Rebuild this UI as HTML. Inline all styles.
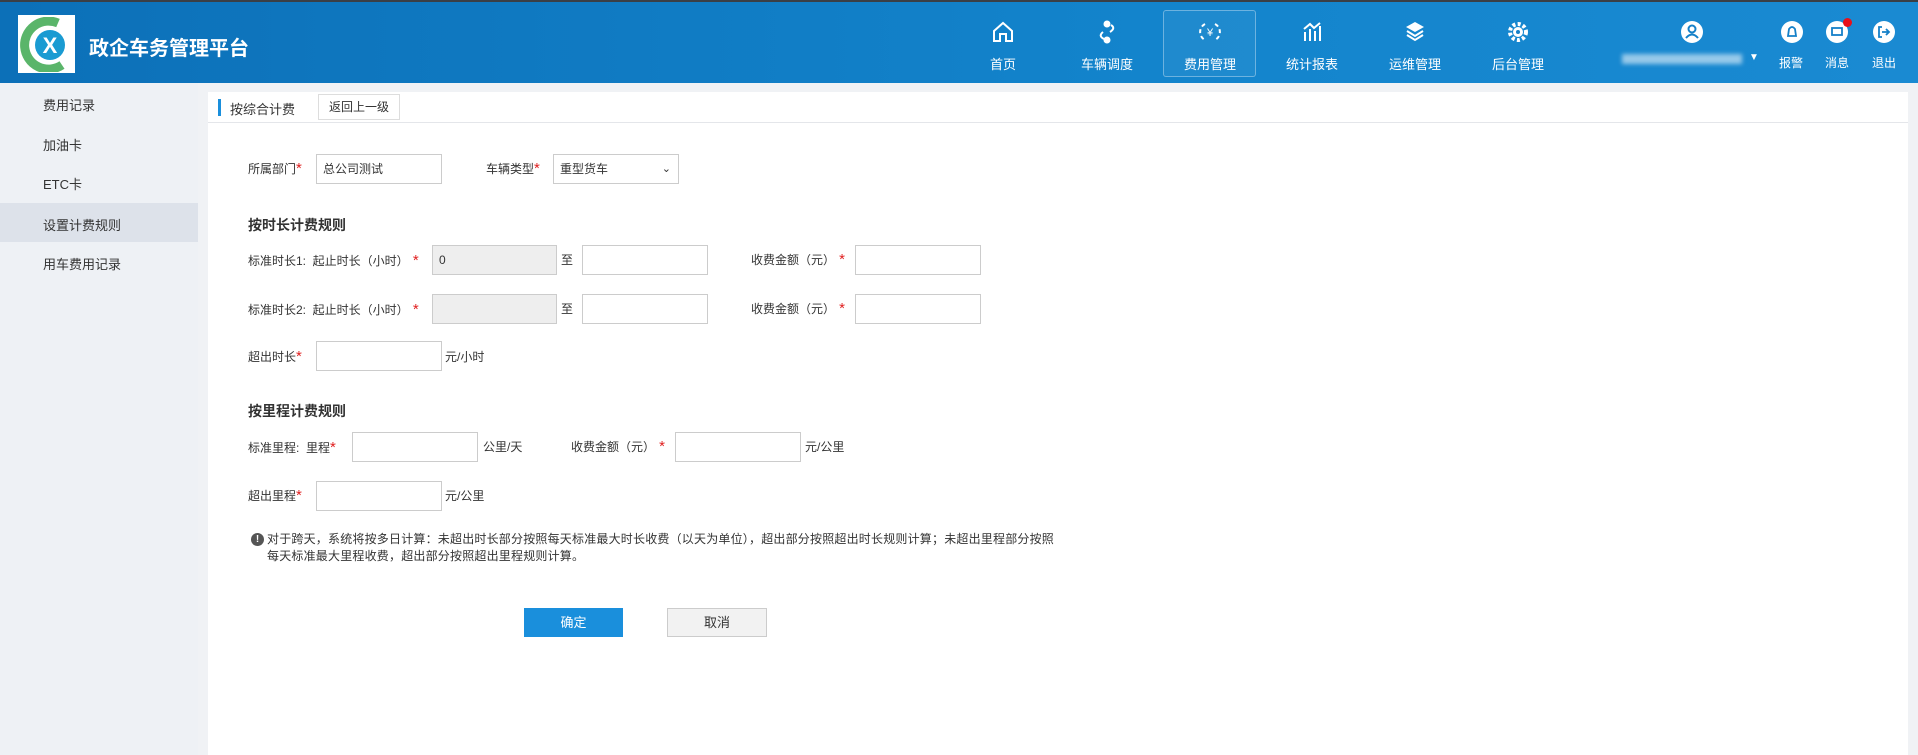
<!DOCTYPE html>
<html><head><meta charset="utf-8"><style>
*{margin:0;padding:0;box-sizing:border-box}
body{width:1918px;height:755px;overflow:hidden;background:#f0f2f5;font-family:"Liberation Sans","Noto Sans CJK SC",sans-serif;font-size:12px;color:#333;position:relative}
.a{position:absolute;white-space:nowrap}
#hd{position:absolute;left:0;top:0;width:1918px;height:83px;background:linear-gradient(90deg,#0c70b8,#1384cc 60%,#1a8ad2);border-top:2px solid #3a3f46}
.nav{position:absolute;top:0;width:100px;height:81px;color:#fff;text-align:center;font-size:13px}
.nav svg{position:absolute;left:38px;top:18px}
.nav span{position:absolute;left:0;right:0;top:52px}
.inp{position:absolute;height:30px;border:1px solid #ccc;background:#fff;font-size:12px;padding-left:6px;line-height:28px}
.r{color:#e02020;font-size:15px;line-height:12px}
.sb{position:absolute;left:43px;font-size:13px;color:#333}
</style></head><body>
<div id="hd">
 <div class="a" style="left:18px;top:13px;width:57px;height:58px;background:#fff"></div>
 <svg class="a" style="left:20px;top:15px" width="54" height="55" viewBox="0 0 54 55"><path d="M38 6 A24 24 0 1 0 42 48" fill="none" stroke="#5ab56a" stroke-width="9"/><circle cx="30" cy="28" r="15" fill="#1a9bd2"/><text x="30" y="36" font-size="22" font-weight="bold" fill="#fff" text-anchor="middle" font-family="Liberation Sans">X</text></svg>
 <div class="a" style="left:89px;top:30px;color:#fff;font-size:20px;font-weight:bold">政企车务管理平台</div>
 <div class="nav" style="left:953px"><svg width="24" height="24" viewBox="0 0 24 24" fill="none" stroke="#fff" stroke-width="2"><path d="M3 11 L12 3 L21 11 V21 H15 V14 H9 V21 H3Z"/></svg><span>首页</span></div>
 <div class="nav" style="left:1057px"><svg width="24" height="24" viewBox="0 0 24 24" fill="none" stroke="#fff" stroke-width="2"><circle cx="12" cy="4" r="2.5" fill="#fff"/><circle cx="12" cy="20" r="2.5" fill="#fff"/><path d="M16 5 Q21 8 15 12 M8 12 Q3 16 9 19"/></svg><span>车辆调度</span></div>
 <div class="a" style="left:1163px;top:8px;width:93px;height:67px;border:1px solid rgba(255,255,255,.35);border-radius:3px;background:rgba(255,255,255,.05)"></div>
 <div class="nav" style="left:1160px"><svg width="24" height="24" viewBox="0 0 24 24" fill="none" stroke="#fff" stroke-width="2"><path d="M7 4 A9 9 0 0 0 7 20 M17 4 A9 9 0 0 1 17 20" stroke-dasharray="4 3"/><text x="12" y="16" font-size="11" fill="#fff" stroke="none" text-anchor="middle">¥</text></svg><span>费用管理</span></div>
 <div class="nav" style="left:1262px"><svg width="24" height="24" viewBox="0 0 24 24" fill="none" stroke="#fff" stroke-width="2"><path d="M5 21V12 M10 21V9 M15 21V11 M20 21V6 M4 9 L10 4 L14 8 L20 3"/></svg><span>统计报表</span></div>
 <div class="nav" style="left:1365px"><svg width="24" height="24" viewBox="0 0 24 24" fill="#fff"><path d="M12 2 L21 7 L12 12 L3 7Z"/><path d="M4 11 L12 16 L20 11 M4 15 L12 20 L20 15" fill="none" stroke="#fff" stroke-width="2"/></svg><span>运维管理</span></div>
 <div class="nav" style="left:1468px"><svg width="24" height="24" viewBox="0 0 24 24"><circle cx="12" cy="12" r="8" fill="none" stroke="#fff" stroke-width="4" stroke-dasharray="3 2.3"/><circle cx="12" cy="12" r="5" fill="#fff"/><circle cx="12" cy="12" r="2" fill="#1480c8"/></svg><span>后台管理</span></div>
 <svg class="a" style="left:1681px;top:19px" width="22" height="22"><circle cx="11" cy="11" r="11" fill="#fff"/><circle cx="11" cy="8" r="3.5" fill="none" stroke="#1480c8" stroke-width="2"/><path d="M5 17 Q11 10 17 17" fill="none" stroke="#1480c8" stroke-width="2"/></svg>
 <div class="a" style="left:1622px;top:52px;width:120px;height:10px;background:rgba(255,255,255,.55);filter:blur(2px)"></div>
 <div class="a" style="left:1749px;top:50px;color:#fff;font-size:10px">▼</div>
 <svg class="a" style="left:1781px;top:19px" width="22" height="22"><circle cx="11" cy="11" r="11" fill="#fff"/><path d="M7 15 L8 8 Q11 4 14 8 L15 15Z" fill="none" stroke="#1480c8" stroke-width="1.8"/></svg>
 <div class="a" style="left:1779px;top:52px;color:#fff;font-size:12px">报警</div>
 <svg class="a" style="left:1826px;top:19px" width="22" height="22"><circle cx="11" cy="11" r="11" fill="#fff"/><rect x="6" y="7" width="10" height="7" fill="none" stroke="#1480c8" stroke-width="1.8"/></svg>
 <div class="a" style="left:1843px;top:16px;width:9px;height:9px;border-radius:50%;background:#e8101a"></div>
 <div class="a" style="left:1825px;top:52px;color:#fff;font-size:12px">消息</div>
 <svg class="a" style="left:1873px;top:19px" width="22" height="22"><circle cx="11" cy="11" r="11" fill="#fff"/><path d="M9 6 H6 V16 H9 M9 11 H16 M13 8 L16 11 L13 14" fill="none" stroke="#1480c8" stroke-width="1.8"/></svg>
 <div class="a" style="left:1872px;top:52px;color:#fff;font-size:12px">退出</div>
</div>
<div class="a" style="left:0;top:83px;width:198px;height:672px;background:#eef1f5"></div>
<div class="a" style="left:0;top:203px;width:198px;height:39px;background:#dde2ea"></div>
<div class="sb" style="top:95px">费用记录</div>
<div class="sb" style="top:135px">加油卡</div>
<div class="sb" style="top:174px">ETC卡</div>
<div class="sb" style="top:215px">设置计费规则</div>
<div class="sb" style="top:254px">用车费用记录</div>
<div class="a" style="left:208px;top:92px;width:1700px;height:663px;background:#fff"></div>
<div class="a" style="left:208px;top:122px;width:1700px;height:1px;background:#e4e6ea"></div>
<div class="a" style="left:218px;top:99px;width:3px;height:17px;background:#1a8fdc"></div>
<div class="a" style="left:230px;top:99px;font-size:13px">按综合计费</div>
<div class="a" style="left:318px;top:94px;width:82px;height:26px;border:1px solid #ddd;font-size:12px;line-height:24px;text-align:center">返回上一级</div>

<div class="a" style="left:248px;top:160px">所属部门<span class="r">*</span></div>
<div class="inp" style="left:316px;top:154px;width:126px">总公司测试</div>
<div class="a" style="left:486px;top:160px">车辆类型<span class="r">*</span></div>
<div class="inp" style="left:553px;top:154px;width:126px">重型货车<span style="position:absolute;right:7px;top:0;font-size:11px">⌄</span></div>

<div class="a" style="left:248px;top:215px;font-size:14px;font-weight:bold">按时长计费规则</div>
<div class="a" style="left:248px;top:252px">标准时长1:&nbsp;&nbsp;起止时长（小时）<span class="r">&nbsp;*</span></div>
<div class="inp" style="left:432px;top:245px;width:125px;background:#eee">0</div>
<div class="a" style="left:561px;top:251px">至</div>
<div class="inp" style="left:582px;top:245px;width:126px"></div>
<div class="a" style="left:751px;top:251px">收费金额（元）<span class="r">&nbsp;*</span></div>
<div class="inp" style="left:855px;top:245px;width:126px"></div>

<div class="a" style="left:248px;top:301px">标准时长2:&nbsp;&nbsp;起止时长（小时）<span class="r">&nbsp;*</span></div>
<div class="inp" style="left:432px;top:294px;width:125px;background:#eee"></div>
<div class="a" style="left:561px;top:300px">至</div>
<div class="inp" style="left:582px;top:294px;width:126px"></div>
<div class="a" style="left:751px;top:300px">收费金额（元）<span class="r">&nbsp;*</span></div>
<div class="inp" style="left:855px;top:294px;width:126px"></div>

<div class="a" style="left:248px;top:348px">超出时长<span class="r">*</span></div>
<div class="inp" style="left:316px;top:341px;width:126px"></div>
<div class="a" style="left:445px;top:348px">元/小时</div>

<div class="a" style="left:248px;top:401px;font-size:14px;font-weight:bold">按里程计费规则</div>
<div class="a" style="left:248px;top:439px">标准里程:&nbsp;&nbsp;里程<span class="r">*</span></div>
<div class="inp" style="left:352px;top:432px;width:126px"></div>
<div class="a" style="left:483px;top:438px">公里/天</div>
<div class="a" style="left:571px;top:438px">收费金额（元）<span class="r">&nbsp;*</span></div>
<div class="inp" style="left:675px;top:432px;width:126px"></div>
<div class="a" style="left:805px;top:438px">元/公里</div>

<div class="a" style="left:248px;top:487px">超出里程<span class="r">*</span></div>
<div class="inp" style="left:316px;top:481px;width:126px"></div>
<div class="a" style="left:445px;top:487px">元/公里</div>

<div class="a" style="left:251px;top:533px;width:13px;height:13px;border-radius:50%;background:#555;color:#fff;font-size:10px;line-height:13px;text-align:center;font-weight:bold">!</div>
<div class="a" style="left:267px;top:531px;font-size:12px;line-height:17px;letter-spacing:0.2px">对于跨天，系统将按多日计算：未超出时长部分按照每天标准最大时长收费（以天为单位），超出部分按照超出时长规则计算；未超出里程部分按照<br>每天标准最大里程收费，超出部分按照超出里程规则计算。</div>

<div class="a" style="left:524px;top:608px;width:99px;height:29px;background:#1a8fdc;color:#fff;text-align:center;line-height:29px;font-size:13px">确定</div>
<div class="a" style="left:667px;top:608px;width:100px;height:29px;background:#f2f2f2;border:1px solid #ccc;text-align:center;line-height:27px;font-size:13px">取消</div>
</body></html>
